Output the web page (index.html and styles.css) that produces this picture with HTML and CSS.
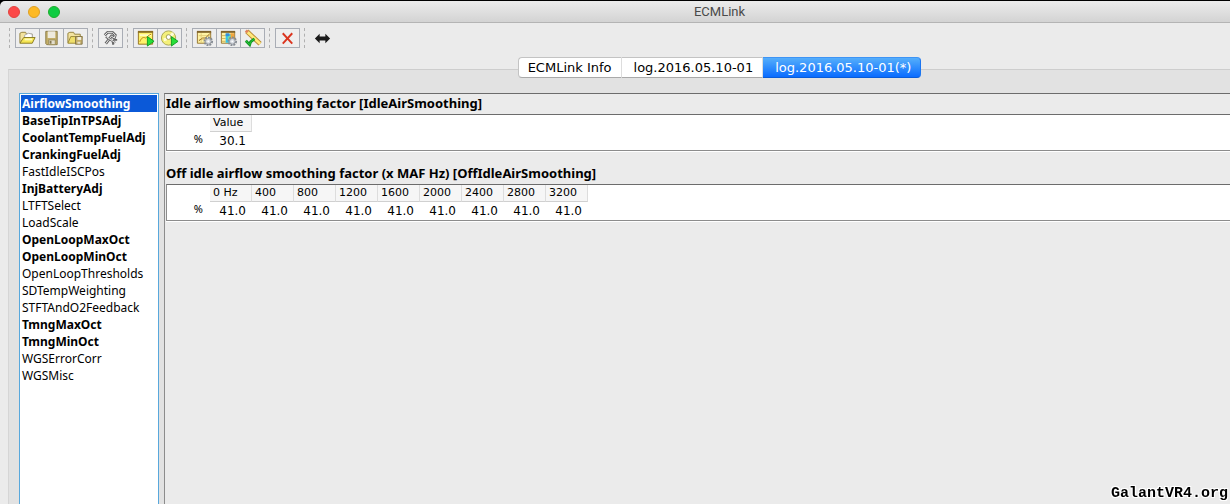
FILE: index.html
```html
<!DOCTYPE html>
<html lang="en">
<head>
<meta charset="utf-8">
<title>ECMLink</title>
<link rel="stylesheet" href="styles.css">
</head>
<body>
<div class="window">
  <header class="titlebar">
    <div class="lights">
      <button class="light close" aria-label="Close"></button>
      <button class="light minimize" aria-label="Minimize"></button>
      <button class="light maximize" aria-label="Zoom"></button>
    </div>
    <h1 class="title">ECMLink</h1>
  </header>

  <div class="toolbar" role="toolbar" aria-label="Main">
    <div class="group">
      <button class="tool" aria-label="Open">
        <svg viewBox="0 0 20 18"><path d="M2 14V4l2-1h4l1 2h6v3" fill="#f3e3a0" stroke="#94823c"/><path d="M7 6l4-2 4 1v4H7z" fill="#fff" stroke="#aaa"/><path d="M2 14.500l4-6h12l-3 6z" fill="#f6e653" stroke="#8a7b22"/><path d="M7 10.500h8" stroke="#fffbb8" stroke-width="2"/></svg>
      </button>
      <button class="tool" aria-label="Save">
        <svg viewBox="0 0 20 18"><path d="M4 2h12v14H5l-1-1z" fill="#c4ae68" stroke="#8b7b48"/><path d="M6 2h8v7H6z" fill="#eeeadd"/><path d="M7 11h7v5H7z" fill="#e3decd" stroke="#9c8e58"/><path d="M9 12v3" stroke="#857850" stroke-width="2"/></svg>
      </button>
      <button class="tool" aria-label="Save as">
        <svg viewBox="0 0 20 18"><path d="M2 14V4l2-1h4l1 2h6v3" fill="#f3e3a0" stroke="#94823c"/><path d="M2 14.500l3-7h12l-2 7z" fill="#f0e06c" stroke="#9a8836"/><path d="M10 7.500h7v8h-7z" fill="#c4ae68" stroke="#85764a"/><path d="M12 8h4v3h-4z" fill="#f2eee0"/><path d="M12 13h3v2h-3z" fill="#e9e3ce"/></svg>
      </button>
    </div>
    <div class="group">
      <button class="tool" aria-label="Settings">
        <svg viewBox="0 0 20 18" fill="none"><path d="M4 6l3-3 5 0 3 3-1 3-3-2-6 8" stroke="#666" stroke-width="3"/><path d="M4 6l3-3 5 0 3 3-1 3-3-2-6 8" stroke="#eee"/><path d="M5 8l10 6M13 11l4 0M12 12l1 4" stroke="#666" stroke-width="2"/><path d="M6 8l9 6" stroke="#eee"/></svg>
      </button>
    </div>
    <div class="group">
      <button class="tool" aria-label="Start log">
        <svg viewBox="0 0 20 18"><path d="M2.500 2.500h15v13h-15z" fill="#fff16a" stroke="#96751f"/><path d="M2 2.500h16" stroke="#8b6e22" stroke-width="2"/><path d="M4 6h12" stroke="#fffbc0" stroke-width="2"/><path d="M4 13c2-5 4-5 6-4 2-1 3-3 6-4" fill="none" stroke="#b98218"/><path d="M12 7.500l7 5-7 5z" fill="#27df38" stroke="#119e22"/></svg>
      </button>
      <button class="tool" aria-label="Play disc">
        <svg viewBox="0 0 20 18"><circle cx="9" cy="9" r="7.500" fill="#f4f07a" stroke="#aaa650"/><path d="M4 11l3-1M11 7l3-3" stroke="#fffdd8" stroke-width="3"/><circle cx="9" cy="8" r="2.500" fill="#fff" stroke="#a09d58"/><path d="M12 7.500l7 5-7 5z" fill="#27df38" stroke="#119e22"/></svg>
      </button>
    </div>
    <div class="group">
      <button class="tool" aria-label="Graph settings">
        <svg viewBox="0 0 20 18"><path d="M2.500 2.500h14v12h-14z" fill="#fff3a4" stroke="#96752f"/><path d="M2 2.500h15" stroke="#80632a" stroke-width="2"/><path d="M4 6.500h12M4 10.500h9M6.500 4v10" stroke="#e4cc78"/><path d="M4 12l4-3 3 0 5-5" fill="none" stroke="#9e6a1f"/><circle cx="14" cy="12.500" r="4" fill="none" stroke="#858b93" stroke-width="2" stroke-dasharray="2 1"/><circle cx="14" cy="12.500" r="3" fill="#d8dce2" stroke="#9298a0"/><circle cx="14" cy="12.500" r="1" fill="#fff"/></svg>
      </button>
      <button class="tool" aria-label="Map settings">
        <svg viewBox="0 0 20 18"><path d="M2.500 2.500h14v12h-14z" fill="#fff3a4" stroke="#96752f"/><path d="M2 2.500h15" stroke="#80632a" stroke-width="2"/><path d="M3 6.500h4M3 9.500h4M3 12.500h4" stroke="#d4b356"/><path d="M7 5h6v9H7z" fill="#35c4ea"/><path d="M7 4h4v3H7z" fill="#348fdc"/><path d="M12 4h4v6h-4z" fill="#f2a53c"/><path d="M9 8l3-2 1 4-3 2z" fill="#78e0a0"/><circle cx="14" cy="12.500" r="4" fill="none" stroke="#858b93" stroke-width="2" stroke-dasharray="2 1"/><circle cx="14" cy="12.500" r="3" fill="#d8dce2" stroke="#9298a0"/><circle cx="14" cy="12.500" r="1" fill="#fff"/></svg>
      </button>
      <button class="tool" aria-label="Edit and apply">
        <svg viewBox="0 0 20 18" fill="none"><path d="M4 2l14 13" stroke="#b98b36" stroke-width="5"/><path d="M4 2l14 13" stroke="#ffe97a" stroke-width="3"/><path d="M3 1l2 2" stroke="#e0805c" stroke-width="3"/><path d="M3 12l4 4 1-3 4-3" stroke="#119322" stroke-width="3"/><path d="M3 12l4 4 1-3 4-3" stroke="#25cf38"/></svg>
      </button>
    </div>
    <div class="group">
      <button class="tool" aria-label="Delete">
        <svg viewBox="0 0 20 18" fill="none"><path d="M5 4l10 11M15 4L5 15" stroke="#db351f" stroke-width="2"/></svg>
      </button>
    </div>
    <div class="group">
      <button class="tool plain" aria-label="Resize horizontally">
        <svg viewBox="0 0 20 18"><path d="M2 9.500L7 4.500v3h6v-3l5 5-5 5v-3H7v3z" fill="#1b1b1b"/></svg>
      </button>
    </div>
  </div>

  <nav class="tabs" role="tablist">
    <button class="tab" role="tab" aria-selected="false">ECMLink Info</button>
    <button class="tab log" role="tab" aria-selected="false">log.2016.05.10-01</button>
    <button class="tab log active" role="tab" aria-selected="true">log.2016.05.10-01(*)</button>
  </nav>

  <main class="pane">
    <ul class="list" role="listbox" aria-label="Tables">
      <li class="item changed selected" role="option" aria-selected="true">AirflowSmoothing</li>
      <li class="item changed" role="option">BaseTipInTPSAdj</li>
      <li class="item changed" role="option">CoolantTempFuelAdj</li>
      <li class="item changed" role="option">CrankingFuelAdj</li>
      <li class="item" role="option">FastIdleISCPos</li>
      <li class="item changed" role="option">InjBatteryAdj</li>
      <li class="item" role="option">LTFTSelect</li>
      <li class="item" role="option">LoadScale</li>
      <li class="item changed" role="option">OpenLoopMaxOct</li>
      <li class="item changed" role="option">OpenLoopMinOct</li>
      <li class="item" role="option">OpenLoopThresholds</li>
      <li class="item" role="option">SDTempWeighting</li>
      <li class="item" role="option">STFTAndO2Feedback</li>
      <li class="item changed" role="option">TmngMaxOct</li>
      <li class="item changed" role="option">TmngMinOct</li>
      <li class="item" role="option">WGSErrorCorr</li>
      <li class="item" role="option">WGSMisc</li>
    </ul>

    <div class="detail">
      <section class="block">
        <h2 class="heading">Idle airflow smoothing factor [IdleAirSmoothing]</h2>
        <div class="frame">
          <table class="grid">
            <thead><tr><td class="corner"></td><th scope="col">Value</th></tr></thead>
            <tbody><tr><th class="unit" scope="row">%</th><td>30.1</td></tr></tbody>
          </table>
        </div>
      </section>
      <section class="block">
        <h2 class="heading">Off idle airflow smoothing factor (x MAF Hz) [OffIdleAirSmoothing]</h2>
        <div class="frame">
          <table class="grid">
            <thead><tr><td class="corner"></td><th scope="col">0 Hz</th><th scope="col">400</th><th scope="col">800</th><th scope="col">1200</th><th scope="col">1600</th><th scope="col">2000</th><th scope="col">2400</th><th scope="col">2800</th><th scope="col">3200</th></tr></thead>
            <tbody><tr><th class="unit" scope="row">%</th><td>41.0</td><td>41.0</td><td>41.0</td><td>41.0</td><td>41.0</td><td>41.0</td><td>41.0</td><td>41.0</td><td>41.0</td></tr></tbody>
          </table>
        </div>
      </section>
    </div>
  </main>
</div>
<div class="watermark">GalantVR4.org</div>
</body>
</html>
```
FILE: styles.css
```css
* {
  box-sizing: border-box;
}

body {
  margin: 0;
  background: #000;
  color: #000;
  font-family: "Lucida Grande", "Noto Sans", sans-serif;
  font-size: 12px;
  overflow: hidden;
}

button {
  font: inherit;
  color: inherit;
}

.window {
  display: flex;
  flex-direction: column;
  height: 100vh;
  padding-top: 1px;
}

.titlebar {
  display: flex;
  flex: none;
  align-items: center;
  height: 22px;
  border-bottom: 1px solid #b4b4b4;
  border-top-left-radius: 5px;
  background: linear-gradient(#ececec, #d3d3d3);
}

.lights {
  display: flex;
  flex: none;
  gap: 8px;
  width: 17%;
  padding-left: 8px;
}

.light {
  width: 12px;
  height: 12px;
  padding: 0;
  border: 1px solid;
  border-radius: 50%;
}

.close {
  border-color: #e2443f;
  background: #fc4948;
}

.minimize {
  border-color: #dfa023;
  background: #fdb924;
}

.maximize {
  border-color: #1dad2b;
  background: #0fcc42;
}

.title {
  flex: 1;
  margin: 0;
  color: #4a4a4a;
  font-family: Roboto, sans-serif;
  font-size: 13px;
  font-weight: 400;
  line-height: 20px;
  text-align: center;
}

.toolbar {
  display: flex;
  flex: none;
  align-items: center;
  height: 31px;
  padding: 0 0 2px 9px;
  background: #ebebeb;
}

.group {
  display: flex;
  padding: 0 4px 0 5px;
  border-left: 1px dashed #b0b0b0;
}

.tool {
  width: 25px;
  height: 20px;
  padding: 0 2px;
  border: 1px solid #a9adb5;
  background: #eee;
}

.tool + .tool {
  margin-left: -1px;
}

.tool svg {
  display: block;
  width: 19px;
  height: 18px;
}

.plain {
  border-color: transparent;
  background: none;
}

.tabs {
  position: relative;
  display: flex;
  flex: none;
  justify-content: center;
  height: 25px;
  margin-bottom: -10px;
  padding: 3px 0 1px 17%;
  font-family: "Lucida Grande", "DejaVu Sans", sans-serif;
  font-size: 13px;
  background: linear-gradient(#ebebeb 15px, transparent 15px);
}

.tab {
  height: 21px;
  padding: 0 9px;
  border: 1px solid #c3c3c3;
  border-right-color: #ddd;
  border-left-width: 0;
  border-bottom-color: #a9a9a9;
  background: #fff;
  line-height: 19px;
  white-space: nowrap;
}

.tab:first-child {
  border-left-width: 1px;
  border-radius: 4px 0 0 4px;
}

.tab.log {
  padding-left: 12px;
}

.tab.active {
  border-color: #3e94f5 #1b75f0 #0a5cd8;
  border-radius: 0 4px 4px 0;
  background: linear-gradient(#55aefb, #0a6cff);
  color: #fff;
}

.pane {
  display: flex;
  flex: 1;
  gap: 5px;
  min-height: 0;
  padding: 23px 0 0 10px;
  border-top: 1px solid #cdcdcd;
  border-left: 1px solid #d5d5d5;
  background: #e2e2e2;
  box-shadow: -8px 0 #ebebeb;
  margin-left: 8px;
}

.list {
  flex: none;
  width: 140px;
  margin: 0;
  padding: 1px;
  border: 1px solid #58a8dc;
  border-bottom: 0;
  background: #fff;
  list-style: none;
}

.item {
  height: 17px;
  padding-left: 1px;
  line-height: 17px;
  white-space: nowrap;
}

.changed {
  font-weight: 700;
}

.selected {
  background: #0b59d8;
  color: #fff;
}

.detail {
  flex: 1;
  min-width: 0;
  border-top: 1px solid #6c6c6c;
  border-left: 1px solid #8c8c8c;
  background: #ebebeb;
}

.block {
  padding: 0 0 13px 1px;
}

.heading {
  margin: 0;
  padding-bottom: 2px;
  font-size: 13px;
  font-weight: 700;
  line-height: 18px;
}

.frame {
  height: 37px;
  border: 1px solid #8c8c8c;
  border-top-color: #6c6c6c;
  border-right: 0;
  background: #fff;
  box-shadow: 0 1px #fff;
}

.grid {
  border-collapse: separate;
  border-spacing: 0;
  table-layout: fixed;
}

.grid td,
.grid th {
  width: 42px;
  height: 17px;
  padding: 0 6px 0 0;
  font-family: "Lucida Grande", "DejaVu Sans", sans-serif;
  font-size: 12px;
  font-weight: 400;
  line-height: 17px;
  text-align: right;
  white-space: nowrap;
}

.grid tbody td {
  height: 18px;
  line-height: 18px;
}

.grid thead th {
  padding: 0 0 0 3px;
  border-right: 1px solid #ddd;
  border-bottom: 1px solid #d0d0d0;
  background: #f6f6f6;
  font-size: 11px;
  line-height: 16px;
  text-align: left;
}

.grid td.corner,
.grid th.unit {
  width: 43px;
  padding-right: 7px;
  font-family: "Lucida Grande", "Noto Sans", sans-serif;
  font-size: 11px;
  line-height: 14px;
  vertical-align: top;
}

.watermark {
  position: fixed;
  right: 2px;
  bottom: 2px;
  font: 700 15px/16px "Liberation Mono", monospace;
  text-shadow: 1px 1px #fff, -1px -1px #fff, 1px -1px #fff, -1px 1px #fff;
}
```
